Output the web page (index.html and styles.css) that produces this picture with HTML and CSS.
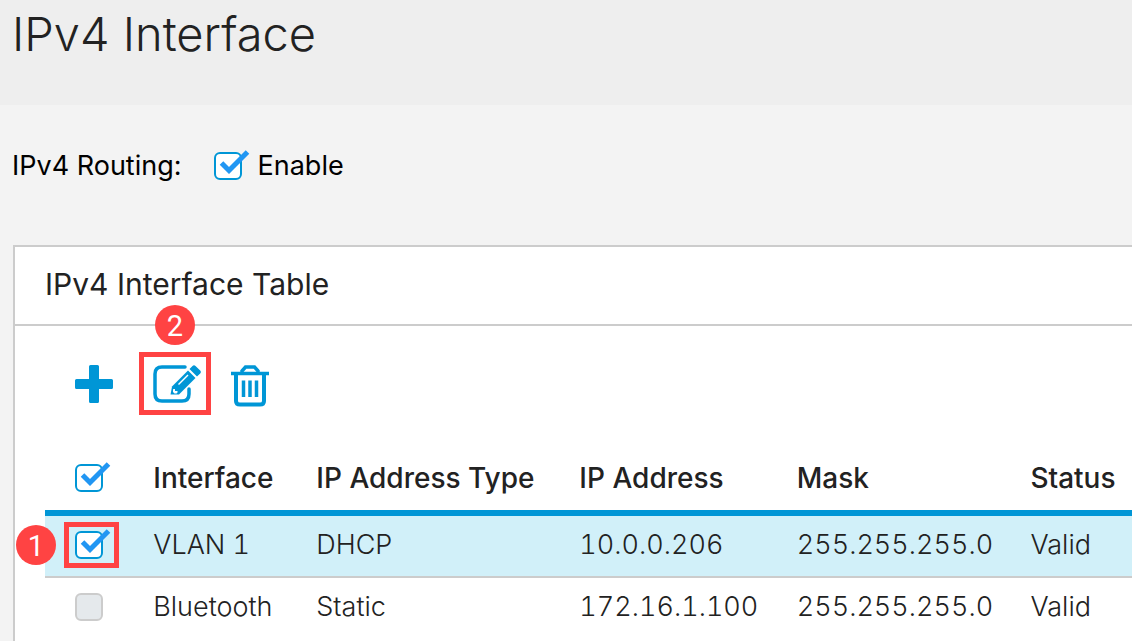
FILE: index.html
```html
<!DOCTYPE html>
<html lang="en">
<head>
    <meta charset="UTF-8">
    <meta name="viewport" content="width=device-width, initial-scale=1.0">
    <title>IPv4 Interface</title>
    <link rel="stylesheet" href="styles.css">
</head>
<body>
    <header class="page-header">
        <h1>IPv4 Interface</h1>
    </header>
    <main>
        <form class="routing">
            <span class="routing-label">IPv4 Routing:</span>
            <label class="check">
                <span class="check-box">
                    <input type="checkbox" name="routing" checked>
                    <svg class="tick" viewBox="0 0 36 32" aria-hidden="true"><path d="M7.500 13L15 20.500L33.500 2"/></svg>
                </span>
                Enable
            </label>
        </form>

        <section class="panel">
            <h2>IPv4 Interface Table</h2>

            <div class="toolbar">
                <button type="button" class="tool" aria-label="Add">
                    <svg width="38" height="38" viewBox="0 0 38 38"><path fill="#0096d6" d="M15.500 0h7a1.500 1.500 0 0 1 1.500 1.500V14h12.500a1.500 1.500 0 0 1 1.500 1.500v7a1.500 1.500 0 0 1-1.500 1.500H24v12.500a1.500 1.500 0 0 1-1.500 1.500h-7a1.500 1.500 0 0 1-1.500-1.500V24H1.500A1.500 1.500 0 0 1 0 22.500v-7A1.500 1.500 0 0 1 1.500 14H14V1.500A1.500 1.500 0 0 1 15.500 0z"/></svg>
                </button>
                <button type="button" class="tool tool-edit" aria-label="Edit">
                    <svg width="48" height="40" viewBox="0 0 48 40">
                        <path d="M32 4H9Q2 4 2 11V31Q2 38 9 38H29Q36 38 36 31V26" fill="none" stroke="#0096d6" stroke-width="3.500" stroke-linecap="round"/>
                        <path d="M19 23.500L35 7.500L42.500 15L26 31.500H17.500Z" fill="#0096d6"/>
                        <path d="M36.500 6L39.500 3Q41 1.500 42.500 3L47.200 7.500Q48.500 9 47.200 10.500L44 13.500Z" fill="#0096d6"/>
                        <path d="M25.500 21.500L35 12" stroke="#fff" stroke-width="1.500"/>
                        <path d="M20.500 26H22V28H24.500V29.500L23.500 30.500H21.500L20 29V26.500Z" fill="#fff"/>
                    </svg>
                    <span class="badge badge-top">2</span>
                </button>
                <button type="button" class="tool" aria-label="Delete">
                    <svg width="38" height="46" viewBox="0 -4 38 46" fill="none" stroke="#0096d6">
                        <path d="M0 8.500H38" stroke-width="3.500"/>
                        <path d="M11 8V6L14.500 2H23.500L27 6V8" stroke-width="3.500"/>
                        <path d="M5 9V36Q5 39.500 9 39.500H29Q33 39.500 33 36V9" stroke-width="4"/>
                        <path d="M12.500 15.500V32M19 15.500V32M25.500 15.500V32" stroke-width="3.500"/>
                    </svg>
                </button>
            </div>

            <table class="interfaces">
                <colgroup>
                    <col class="col-check">
                    <col class="col-interface">
                    <col class="col-type">
                    <col class="col-address">
                    <col class="col-mask">
                    <col class="col-status">
                </colgroup>
                <thead>
                    <tr>
                        <th>
                            <span class="check-box">
                                <input type="checkbox" aria-label="Select all" checked>
                                <svg class="tick" viewBox="0 0 36 32" aria-hidden="true"><path d="M7.500 13L15 20.500L33.500 2"/></svg>
                            </span>
                        </th>
                        <th>Interface</th>
                        <th>IP Address Type</th>
                        <th>IP Address</th>
                        <th>Mask</th>
                        <th>Status</th>
                    </tr>
                </thead>
                <tbody>
                    <tr class="selected">
                        <td>
                            <span class="check-box marked">
                                <input type="checkbox" aria-label="Select VLAN 1" checked>
                                <svg class="tick" viewBox="0 0 36 32" aria-hidden="true"><path d="M7.500 13L15 20.500L33.500 2"/></svg>
                                <span class="badge badge-left">1</span>
                            </span>
                        </td>
                        <td>VLAN 1</td>
                        <td>DHCP</td>
                        <td>10.0.0.206</td>
                        <td>255.255.255.0</td>
                        <td>Valid</td>
                    </tr>
                    <tr>
                        <td>
                            <span class="check-box">
                                <input type="checkbox" aria-label="Select Bluetooth">
                                <svg class="tick" viewBox="0 0 36 32" aria-hidden="true"><path d="M7.500 13L15 20.500L33.500 2"/></svg>
                            </span>
                        </td>
                        <td>Bluetooth</td>
                        <td>Static</td>
                        <td>172.16.1.100</td>
                        <td>255.255.255.0</td>
                        <td>Valid</td>
                    </tr>
                </tbody>
            </table>
        </section>
    </main>
</body>
</html>
```

FILE: styles.css
```css
* {
    box-sizing: border-box;
}

body {
    display: flex;
    flex-direction: column;
    min-height: 100vh;
    margin: 0;
    font-family: Inter, "Liberation Sans", sans-serif;
    font-size: 27px;
    font-weight: 300;
    line-height: 36px;
    color: #222;
    background-color: #f3f3f3;
    overflow-x: hidden;
}

.page-header {
    padding: 6px 12px 43px;
    background-color: #eee;
}

h1 {
    margin: 0;
    font-size: 47px;
    font-weight: 300;
    line-height: 56px;
}

main {
    display: flex;
    flex-direction: column;
    flex: 1;
}

.routing {
    display: flex;
    align-items: center;
    gap: 32px;
    padding: 43px 12px 61px;
    font-weight: 400;
    color: #000;
}

.check {
    display: flex;
    align-items: center;
    gap: 16px;
}

/* checkbox with a tick that runs past its corner */
.check-box {
    position: relative;
    display: block;
    width: 28px;
    height: 28px;
}

.check-box input {
    appearance: none;
    display: block;
    width: 28px;
    height: 28px;
    margin: 0;
    border: 2px solid #ccc;
    border-radius: 6px;
    background-color: #e5e9ec;
}

.check-box input:checked {
    border-color: #0096d6;
    background-color: #fff;
}

.tick {
    display: none;
    position: absolute;
    left: 0;
    top: -2px;
    width: 36px;
    height: 32px;
    fill: none;
    stroke: #2196f3;
    stroke-width: 5;
    overflow: visible;
    pointer-events: none;
}

.check-box input:checked + .tick {
    display: block;
}

.panel {
    flex: 1;
    margin-left: 13px;
    border: 2px solid #ccc;
    border-right: none;
    border-bottom: none;
    background-color: #fff;
}

h2 {
    margin: 0;
    padding: 19px 30px 22px;
    border-bottom: 2px solid #ccc;
    font-size: 30px;
    font-weight: 400;
    line-height: 36px;
}

.toolbar {
    display: flex;
    align-items: center;
    gap: 20px;
    padding: 26px 60px 28px;
}

.tool {
    display: flex;
    padding: 0;
    border: none;
    background: none;
}

.tool-edit {
    position: relative;
    margin-left: 6px;
    padding: 6px 5px 7px 9px;
    border: 5px solid #ff4343;
}

.badge {
    position: absolute;
    width: 40px;
    height: 40px;
    border-radius: 50%;
    background-color: #ff4343;
    color: #fff;
    font-family: Roboto, "Liberation Sans", sans-serif;
    font-size: 29px;
    font-weight: 400;
    line-height: 42px;
    text-align: center;
}

.badge-top {
    left: 11px;
    top: -52px;
}

.badge-left {
    left: -59px;
    top: -6px;
}

/* red frame round the selected row's checkbox */
.marked::before {
    content: "";
    position: absolute;
    inset: -9px -16px -9px -11px;
    border: 5px solid #ff4343;
}

.interfaces {
    width: calc(100% - 30px);
    margin-left: 30px;
    table-layout: fixed;
    border-collapse: separate;
    border-spacing: 0;
    font-variant-numeric: tabular-nums;
}

.interfaces th,
.interfaces td {
    padding: 11px 0 13px 30px;
    text-align: left;
    white-space: nowrap;
}

.interfaces th {
    padding: 17px 0 14px 30px;
    border-bottom: 6px solid #0096d6;
    font-size: 28px;
    font-weight: 500;
}

.interfaces td {
    border-bottom: 2px solid #ccc;
}

.interfaces tr:last-child td {
    border-bottom: none;
}

.interfaces .selected td {
    background-color: #d1f0f9;
}

.col-check {
    width: 7.2%;
}

.col-interface {
    width: 15%;
}

.col-type {
    width: 24.2%;
}

.col-address {
    width: 20%;
}

.col-mask {
    width: 21.5%;
}

.col-status {
    width: 12.1%;
}
```
